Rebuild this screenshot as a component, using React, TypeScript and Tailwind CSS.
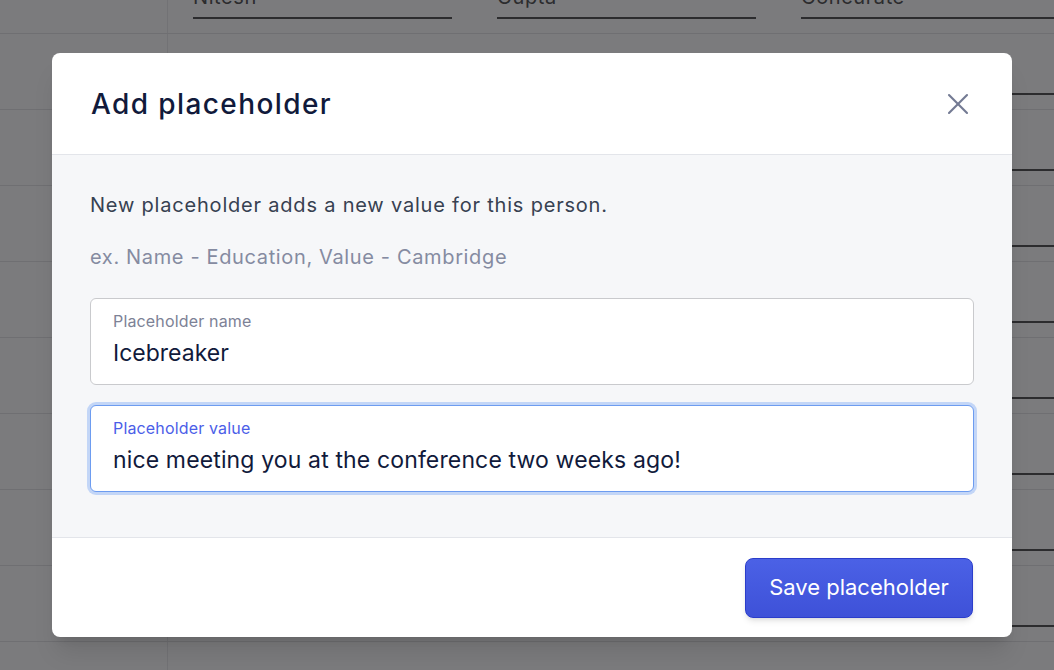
import { X } from 'lucide-react'

const rows = [
  { first: 'Nitesh', last: 'Gupta', company: 'Concurate', h: 'h-[34px]' },
  { first: '', last: '', company: '', h: 'h-[76px]' },
  { first: '', last: '', company: '', h: 'h-[76px]' },
  { first: '', last: '', company: '', h: 'h-[76px]' },
  { first: '', last: '', company: '', h: 'h-[76px]' },
  { first: '', last: '', company: '', h: 'h-[76px]' },
  { first: '', last: '', company: '', h: 'h-[76px]' },
  { first: '', last: '', company: '', h: 'h-[76px]' },
  { first: '', last: '', company: '', h: 'h-[76px]' },
  { first: '', last: '', company: '', h: 'h-[76px]' },
]

function Cell({ value }: { value: string }) {
  return (
    <div className="w-[259px] shrink-0 h-[17px] flex flex-col justify-end border-b-2 border-[#2c2c2e]">
      <div className="mb-[11px] text-[20px] leading-[18px] tracking-[0.03em] text-[#2c2c2e] whitespace-nowrap">{value}</div>
    </div>
  )
}

export default function App() {
  return (
    <div className="relative h-[670px] w-[1054px] overflow-hidden bg-[#7b7b7d]" style={{ fontFamily: 'Inter, "Noto Sans", sans-serif' }}>
      {/* page behind the overlay */}
      <div className="flex flex-col">
        {rows.map((r, i) => (
          <div key={i} className={`flex ${r.h} border-b border-[#6f6f72] shrink-0`}>
            <div className="w-[168px] shrink-0 border-r border-[#727275]" />
            <div className="flex items-end gap-[45px] pl-[25px] pb-[14px]">
              <Cell value={r.first} />
              <Cell value={r.last} />
              <Cell value={r.company} />
            </div>
          </div>
        ))}
      </div>

      {/* modal */}
      <div className="absolute left-[52px] top-[53px] w-[960px] rounded-lg bg-white shadow-xl overflow-hidden">
        <div className="flex items-center justify-between h-[102px] px-[39px] border-b border-[#e3e5ea]">
          <h2 className="text-[28px] font-medium tracking-[0.05em] text-[#111a3b]">Add placeholder</h2>
          <button className="text-[#737a93] -mr-[3px]">
            <X size={36} strokeWidth={1.4} />
          </button>
        </div>

        <div className="bg-[#f6f7f9] px-[38px] pt-[35px] pb-[45px]">
          <p className="text-[20px] leading-[30px] tracking-[0.04em] text-[#374151]">New placeholder adds a new value for this person.</p>
          <p className="mt-[22px] text-[20px] leading-[30px] tracking-[0.032em] text-[#858ba1]">ex. Name - Education, Value - Cambridge</p>

          <div className="mt-[26px] rounded-md border border-[#c9cacd] bg-white pl-[22px] pt-[12px] pb-[15px]">
            <div className="text-[16px] leading-[20px] tracking-[0.01em] text-[#7d8296]">Placeholder name</div>
            <div className="mt-[6px] text-[23px] leading-[32px] text-[#111a3b]">Icebreaker</div>
          </div>

          <div className="mt-[20px] rounded-md border border-[#6d9cf0] ring-[3px] ring-[#c3d6f7] bg-white pl-[22px] pt-[12px] pb-[15px]">
            <div className="text-[16px] leading-[20px] tracking-[0.01em] text-[#4b5ee8]">Placeholder value</div>
            <div className="mt-[6px] text-[23px] leading-[32px] tracking-[0.006em] text-[#111a3b]">nice meeting you at the conference two weeks ago!</div>
          </div>
        </div>

        <div className="flex justify-end items-center h-[100px] px-[39px] border-t border-[#e3e5ea]">
          <button className="h-[60px] w-[228px] rounded-lg border border-[#2b3dca] bg-gradient-to-b from-[#4b61e6] to-[#3e51d8] text-[22px] text-white shadow-md">
            Save placeholder
          </button>
        </div>
      </div>
    </div>
  )
}
